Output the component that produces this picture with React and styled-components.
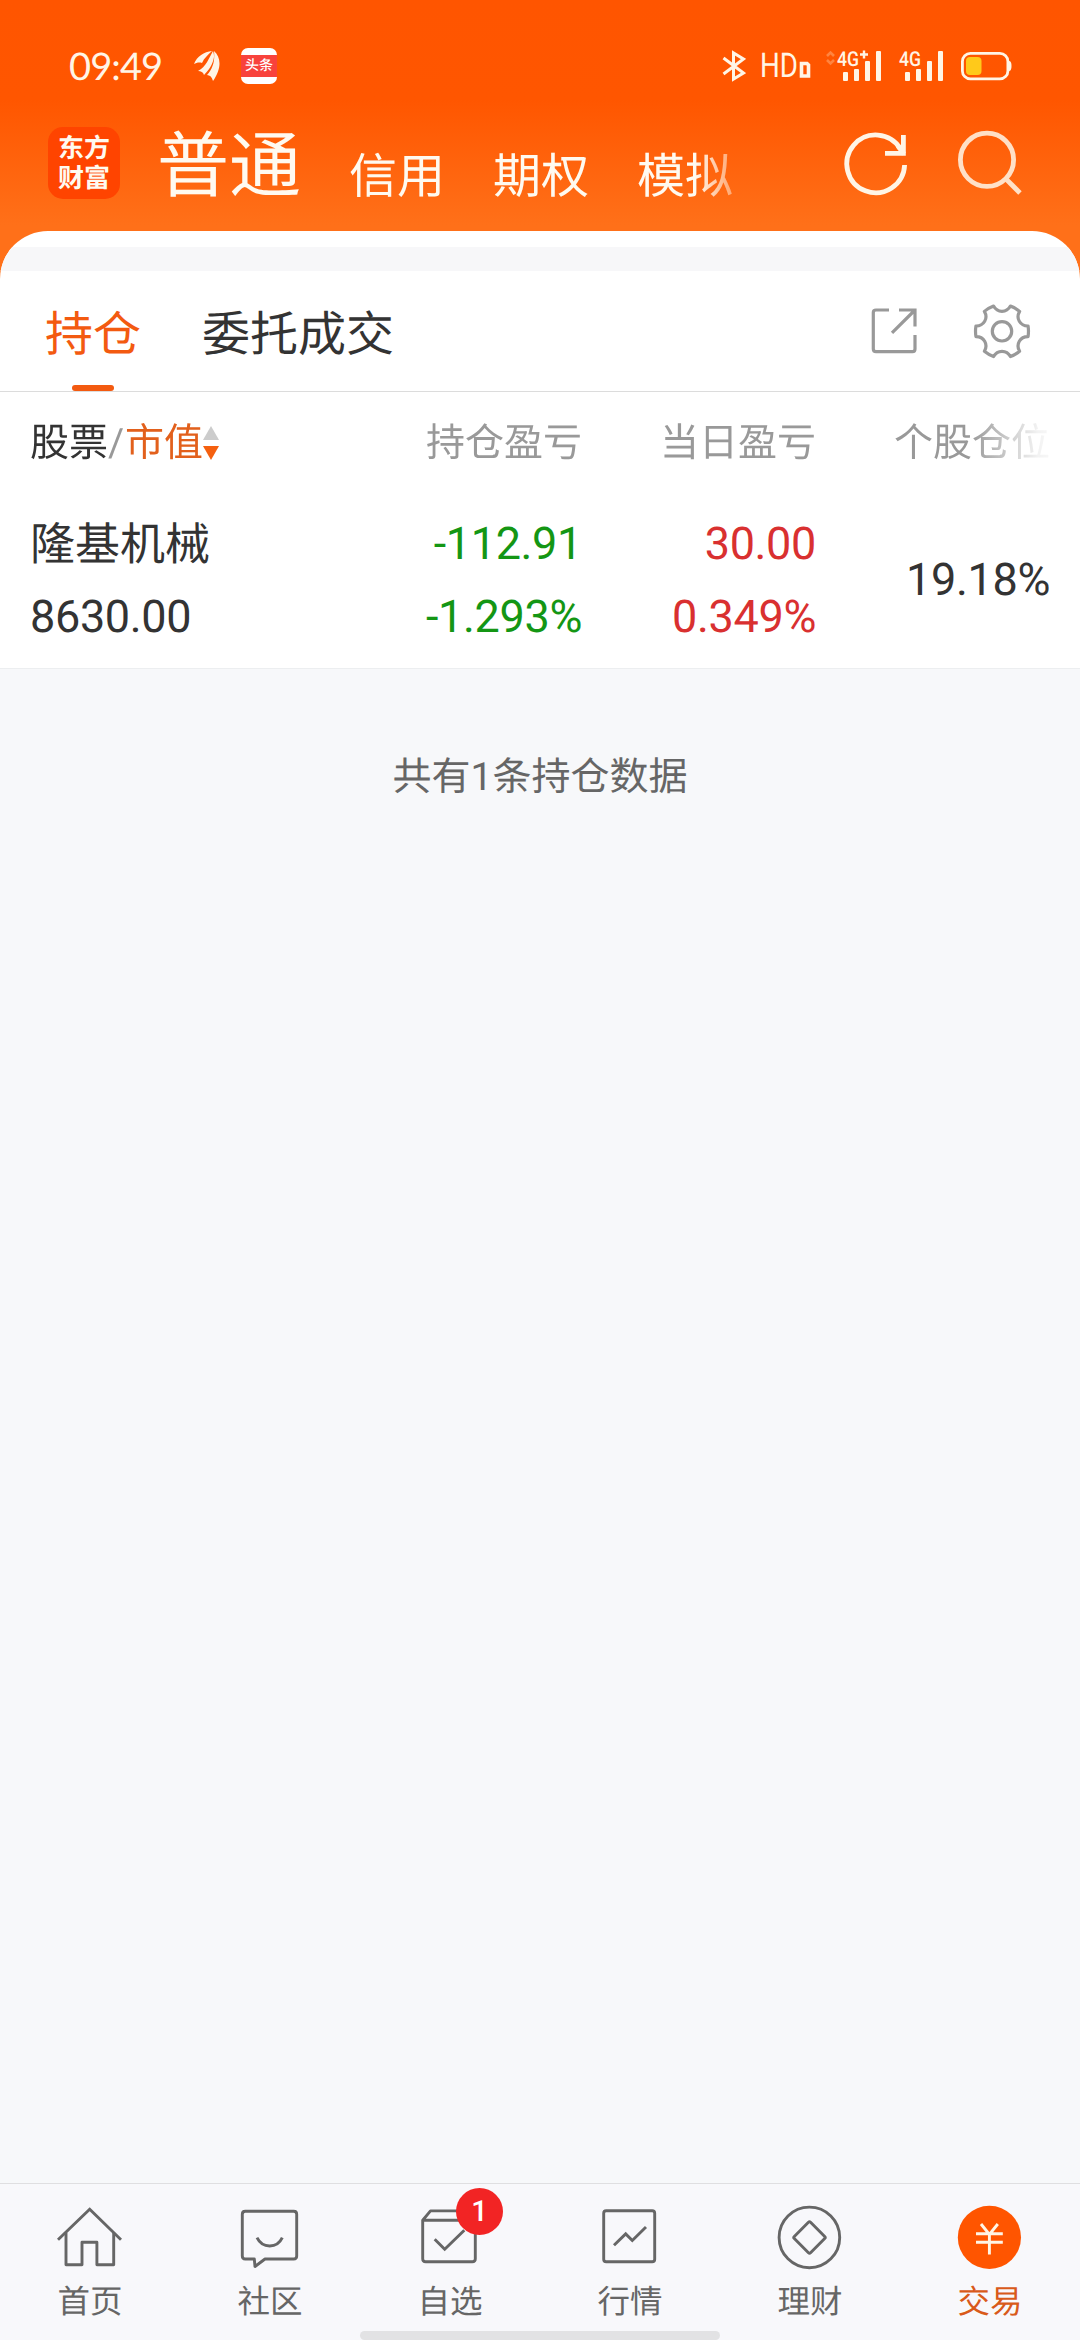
import React from "react";
import styled, { createGlobalStyle } from "styled-components";

const GlobalStyle = createGlobalStyle`
  * { box-sizing: border-box; }
  body { margin: 0; background: #f7f8fa; text-rendering: geometricPrecision; }
`;

const Screen = styled.div`
  width: 1080px;
  height: 2340px;
  display: flex;
  flex-direction: column;
  overflow: hidden;
  background: #f7f8fa;
  color: #333;
  font-family: Roboto, "Noto Sans CJK SC", sans-serif;
`;

const Hero = styled.header`
  background: linear-gradient(#ff5500 0, #ff5600 100px, #ff7019 225px, #ff7019 100%);
  height: 391px;
  flex: none;
  display: flex;
  flex-direction: column;
`;

const StatusBar = styled.div`
  height: 120px;
  padding: 12px 68px 0 69px;
  display: flex;
  align-items: center;
  justify-content: space-between;
  color: #fff5e6;
`;

const StatusGroup = styled.div`
  display: flex;
  align-items: center;
`;

const Clock = styled.span`
  font: 400 38px/46px Lato, sans-serif;
  letter-spacing: -0.9px;
  width: 125px;
`;

const HeadlineApp = styled.span`
  width: 36px;
  height: 36px;
  margin-left: 21px;
  border-radius: 7px;
  background: #fff;
  display: flex;
  align-items: center;
`;

const HeadlineBand = styled.span`
  width: 36px;
  height: 22px;
  background: #f8423c;
  color: #fff;
  font: 500 14px/21px "Noto Sans CJK SC", sans-serif;
  text-align: center;
`;

const StatusIcon = styled.svg`
  display: block;
  flex: none;
  margin-left: ${(p) => p.$gap || 0}px;
`;

const TitleBar = styled.div`
  height: 111px;
  padding: 0 54px 0 48px;
  display: flex;
  align-items: flex-start;
`;

const Logo = styled.div`
  width: 72px;
  height: 72px;
  margin-top: 7px;
  padding-top: 6px;
  border-radius: 15px;
  background: #ff4400;
  color: #fffaf0;
  font: 700 26px/30px "Liberation Sans", "Noto Sans CJK SC", sans-serif;
  text-align: center;
`;

const LogoLine = styled.div`
  height: 30px;
`;

const AccountTabs = styled.nav`
  width: 604px;
  height: 100px;
  margin-left: 37px;
  display: flex;
  gap: 48px;
  align-items: flex-start;
  color: #fffaf0;
  font-family: "Noto Sans CJK SC", sans-serif;
  mask-image: linear-gradient(to right, #000 538px, transparent 604px);
`;

const AccountTab = styled.span`
  flex: none;
  margin-top: ${(p) => (p.$active ? 0 : 22)}px;
  font-size: ${(p) => (p.$active ? 72 : 48)}px;
  line-height: ${(p) => (p.$active ? 80 : 60)}px;
`;

const TitleIcon = styled.svg`
  display: block;
  flex: none;
  margin: 8px 0 0 ${(p) => p.$gap}px;
  fill: none;
  stroke: #fff5e6;
  stroke-width: 4.8;
`;

const Sheet = styled.section`
  flex: 1;
  border-radius: 48px 48px 0 0;
  overflow: hidden;
  background: #fff;
  display: flex;
  flex-direction: column;
`;

const SheetBand = styled.div`
  height: 24px;
  margin-top: 16px;
  background: #f7f7f9;
`;

const SubTabs = styled.div`
  height: 120px;
  padding: 0 48px 0 45px;
  display: flex;
  gap: 61px;
`;

const SubTab = styled.div`
  height: 120px;
  display: flex;
  flex-direction: column;
  align-items: center;
  justify-content: space-between;
  padding-top: 25.5px;
  font-size: 48px;
  line-height: 76px;
  color: ${(p) => (p.$active ? "#f35a10" : "#333")};

  &::after {
    content: "";
    width: 42px;
    height: 6px;
    border-radius: 3px;
    background: ${(p) => (p.$active ? "#f35a10" : "transparent")};
  }
`;

const ToolGroup = styled.div`
  margin-left: auto;
  padding-top: 30px;
  display: flex;
  gap: 48px;
`;

const ToolIcon = styled.svg`
  display: block;
  fill: none;
  stroke: #999;
  stroke-width: 3.2;
`;

const Holdings = styled.section`
  flex: none;
  height: 278px;
  padding: 0 30px;
  background: #fff;
  border-top: 1px solid #dcdcdc;
  border-bottom: 1px solid #eceef0;
`;

const HeadRow = styled.div`
  display: grid;
  grid-template-columns: 318px 234px 234px 234px;
  height: 102px;
  font-size: 39px;
  line-height: 102px;
  color: #999;
  text-align: right;
  mask-image: linear-gradient(to right, #000 940px, rgba(0, 0, 0, 0.12) 1008px, transparent 1040px);
`;

const SortHead = styled.div`
  display: flex;
  align-items: center;
  text-align: left;
`;

const HeadWord = styled.span`
  color: ${(p) => (p.$active ? "#e2601c" : p.$muted ? "#999" : "#333")};
  width: ${(p) => (p.$muted ? 17 : 78)}px;
  flex: none;
`;

const SortArrows = styled.svg`
  display: block;
`;

const StockRow = styled.div`
  display: grid;
  grid-template-columns: 318px 234px 234px 234px;
  align-items: center;
  height: 174px;
  font-size: 45px;
  line-height: 73px;
`;

const Cell = styled.div`
  display: flex;
  flex-direction: column;
  text-align: ${(p) => (p.$start ? "left" : "right")};
  color: ${(p) => p.$color || "#333"};
  letter-spacing: -0.35px;
  padding-bottom: 3px;
`;

const StockName = styled.span`
  line-height: 75px;
  margin-bottom: -2px;
  letter-spacing: 0;
`;

const Summary = styled.main`
  flex: 1;
  padding-top: 78px;
  text-align: center;
  font-size: 39px;
  line-height: 60px;
  color: #666;
`;

const BottomNav = styled.nav`
  flex: none;
  height: 148px;
  border-top: 1px solid #dfdfe1;
  background: #f8f8fb;
  display: grid;
  grid-template-columns: repeat(6, 180px);
`;

const NavItem = styled.div`
  position: relative;
  height: 147px;
  padding-top: 18px;
  display: flex;
  flex-direction: column;
  align-items: center;
  color: ${(p) => (p.$active ? "#d95a1a" : "#666")};
  font-size: 32.5px;
  line-height: 44px;
`;

const NavIcon = styled.svg`
  display: block;
  margin-bottom: 6px;
  fill: none;
  stroke: #666;
  stroke-width: 2.9;
`;

const Badge = styled.span`
  position: absolute;
  left: 96px;
  top: 4px;
  width: 47px;
  height: 47px;
  border-radius: 50%;
  background: #f22424;
  color: #fff;
  font: 500 29px/48px Roboto, sans-serif;
  text-align: center;
`;

const HomeIndicator = styled.div`
  flex: none;
  width: 360px;
  height: 9px;
  align-self: center;
  border-radius: 4.5px;
  background: #e2e2e4;
`;

const Footer = styled.footer`
  flex: none;
  height: 157px;
  display: flex;
  flex-direction: column;
  background: #f8f8fb;
`;

const BarsIcon = ({ label, gap, plus }) => (
  <StatusIcon width="56" height="44" viewBox="0 -6 56 44" $gap={gap} fill="#fff5e6">
    {plus && (
      <path d="M2 6l3.5-3.5L9 6M2 10l3.5 3.5L9 10" fill="none" stroke="#ff8440" strokeWidth="2.6" />
    )}
    <text x="12" y="16" fontFamily="Roboto, sans-serif" fontSize="20.5" fontWeight="500" textLength="22" lengthAdjust="spacingAndGlyphs">{label}</text>
    {plus && <path d="M35 4.5h8M39 .5v8" stroke="#fff5e6" strokeWidth="2.4" />}
    <rect x="18" y="22" width="5" height="9" rx="1" />
    <rect x="29" y="19" width="5" height="12" rx="1" />
    <rect x="40" y="11" width="5" height="20" rx="1" />
    <rect x="51" y="1" width="5" height="30" rx="1" />
  </StatusIcon>
);

const gearPath = (() => {
  const at = (r, deg) => {
    const a = (deg * Math.PI) / 180;
    return `${(28 + r * Math.cos(a)).toFixed(2)} ${(28 + r * Math.sin(a)).toFixed(2)}`;
  };
  let d = `M${at(26.6, -11.5)}`;
  for (let t = 0; t < 360; t += 60) {
    d += `Q${at(26.9, t)} ${at(26.6, t + 11.5)}`;
    d += `C${at(18.8, t + 16)} ${at(18.8, t + 44)} ${at(26.6, t + 48.5)}`;
  }
  return d + "Z";
})();

const navItems = [
  {
    label: "首页",
    icon: (
      <>
        <path d="M4 37.7L35.7 7.3L67 37.7" />
        <path d="M12 30.7V62.7H28V40.3H42.9V62.7H59.7V30.7" strokeLinejoin="round" />
      </>
    ),
  },
  {
    label: "社区",
    icon: (
      <>
        <path d="M11.3 9.3H59.7Q62.7 9.3 62.7 12.3V54Q62.7 57 59.7 57H31L21 64.5L20.3 57H11.3Q8.3 57 8.3 54V12.3Q8.3 9.3 11.3 9.3Z" strokeLinejoin="round" />
        <path d="M23 35.7Q27 44 35.7 44T48.3 35.7" />
      </>
    ),
  },
  {
    label: "自选",
    badge: "1",
    icon: (
      <>
        <path d="M8.7 18.3V56.7Q8.7 59.7 11.7 59.7H58.3Q61.3 59.7 61.3 56.7V12Q61.3 8.9 58.3 8.9H16.5L8.7 18.3H61.3" strokeLinejoin="round" />
        <path d="M20.7 37.3L30.7 47.3L50.3 28.3" />
      </>
    ),
  },
  {
    label: "行情",
    icon: (
      <>
        <rect x="9.7" y="8.7" width="51" height="51" rx="2.5" />
        <path d="M20 43.3L31.7 31.9L38.3 38.5L52 25" />
      </>
    ),
  },
  {
    label: "理财",
    icon: (
      <>
        <circle cx="35.4" cy="35.4" r="30.3" />
        <rect x="24" y="24" width="23" height="23" rx="1.5" transform="rotate(45 35.5 35.5)" />
      </>
    ),
  },
  {
    label: "交易",
    active: true,
    icon: (
      <>
        <circle cx="35.4" cy="35.4" r="31.6" fill="#ff5500" stroke="none" />
        <path d="M27 22L35.4 32.5L43.8 22M35.4 32V52.5M22 31.8H48.8M22 40.3H48.8" stroke="#fff5e6" />
      </>
    ),
  },
];

export default function App() {
  return (
    <>
      <GlobalStyle />
      <Screen>
        <Hero>
          <StatusBar>
            <StatusGroup>
              <Clock>09:49</Clock>
              <StatusIcon width="26" height="32" viewBox="0 0 26 32" fill="#fff5e6">
                <path d="M0 14C3 6 10 2 18 1C14 5 10 8 8 13C5 12 2 13 0 14Z" />
                <path d="M4 21C12 17 15 8 19 1C20 4 20 5 20 7C19 14 15 20 10 25C9 22 7 21 4 21Z" />
                <path d="M13 25C19 18 21 11 20 1C27 7 28 18 19 31C18 27 16 25 13 25Z" />
              </StatusIcon>
              <HeadlineApp>
                <HeadlineBand>头条</HeadlineBand>
              </HeadlineApp>
            </StatusGroup>
            <StatusGroup>
              <StatusIcon width="24" height="32" viewBox="0 0 24 32">
                <path d="M1.5 8L21.5 23L11.5 29V3L21.5 9L1.5 24" fill="none" stroke="#fff5e6" strokeWidth="3" />
              </StatusIcon>
              <StatusIcon width="52" height="44" viewBox="-2 -6 52 44" $gap={13} fill="#fff5e6">
                <text x="-1" y="27" fontFamily="Roboto, sans-serif" fontSize="34" textLength="38" lengthAdjust="spacingAndGlyphs">HD</text>
                <path d="M40.5 13.5H46L47.5 15V26H40.5Z" fill="none" stroke="#fff5e6" strokeWidth="3.6" />
              </StatusIcon>
              <BarsIcon label="4G" plus gap={14} />
              <BarsIcon label="4G" gap={6} />
              <StatusIcon width="51" height="30" viewBox="0 0 51 30" $gap={18}>
                <rect x="1.4" y="2.4" width="45.5" height="25.5" rx="8" fill="none" stroke="#fff5e6" strokeWidth="2.8" />
                <path d="M48 10Q50.5 10 50.5 15T48 20Z" fill="#fff5e6" />
                <rect x="5" y="6" width="15.5" height="18" rx="4" fill="#ffc91a" />
              </StatusIcon>
            </StatusGroup>
          </StatusBar>
          <TitleBar>
            <Logo>
              <LogoLine>东方</LogoLine>
              <LogoLine>财富</LogoLine>
            </Logo>
            <AccountTabs>
              <AccountTab $active>普通</AccountTab>
              <AccountTab>信用</AccountTab>
              <AccountTab>期权</AccountTab>
              <AccountTab>模拟</AccountTab>
            </AccountTabs>
            <TitleIcon width="72" height="72" viewBox="840 128 72 72" $gap={79}>
              <path d="M904.6 165A28.9 28.9 0 1 1 900.5 149" />
              <path d="M903.4 135V153.3H885" />
              <path d="M898 146L904 154" />
            </TitleIcon>
            <TitleIcon width="72" height="72" viewBox="952 128 72 72" $gap={40} opacity="0.86">
              <circle cx="987" cy="159.8" r="26.6" />
              <path d="M1005.5 178.5L1020 193" />
            </TitleIcon>
          </TitleBar>
          <Sheet>
            <SheetBand />
            <SubTabs>
              <SubTab $active>持仓</SubTab>
              <SubTab>委托成交</SubTab>
              <ToolGroup>
                <ToolIcon width="60" height="60" viewBox="864 301 60 60">
                  <path d="M889 310H876Q873.3 310 873.3 312.5V349Q873.3 351.6 876 351.6H912.5Q915 351.6 915 349V335" />
                  <path d="M899 310H915V326.5M914.5 310.5L892 332.8" />
                </ToolIcon>
                <ToolIcon width="60" height="60" viewBox="-2 -2.3 60 60">
                  <path d={gearPath} strokeLinejoin="round" />
                  <circle cx="28" cy="28" r="9.7" />
                </ToolIcon>
              </ToolGroup>
            </SubTabs>
          </Sheet>
        </Hero>
        <Holdings>
          <HeadRow>
            <SortHead>
              <HeadWord>股票</HeadWord>
              <HeadWord $muted>/</HeadWord>
              <HeadWord $active>市值</HeadWord>
              <SortArrows width="16" height="36" viewBox="0 0 16 36">
                <path d="M8 1L16 15H0Z" fill="#ccc" />
                <path d="M0 21H16L8 35Z" fill="#f5600f" />
              </SortArrows>
            </SortHead>
            <div>持仓盈亏</div>
            <div>当日盈亏</div>
            <div>个股仓位</div>
          </HeadRow>
          <StockRow>
            <Cell $start>
              <StockName>隆基机械</StockName>
              <span>8630.00</span>
            </Cell>
            <Cell $color="#149614">
              <span>-112.91</span>
              <span>-1.293%</span>
            </Cell>
            <Cell $color="#d93030">
              <span>30.00</span>
              <span>0.349%</span>
            </Cell>
            <Cell>
              <span>19.18%</span>
            </Cell>
          </StockRow>
        </Holdings>
        <Summary>共有1条持仓数据</Summary>
        <Footer>
          <BottomNav>
            {navItems.map((item) => (
              <NavItem key={item.label} $active={item.active}>
                <NavIcon width="72" height="72" viewBox="0 0 72 72">{item.icon}</NavIcon>
                {item.label}
                {item.badge && <Badge>{item.badge}</Badge>}
              </NavItem>
            ))}
          </BottomNav>
          <HomeIndicator />
        </Footer>
      </Screen>
    </>
  );
}
